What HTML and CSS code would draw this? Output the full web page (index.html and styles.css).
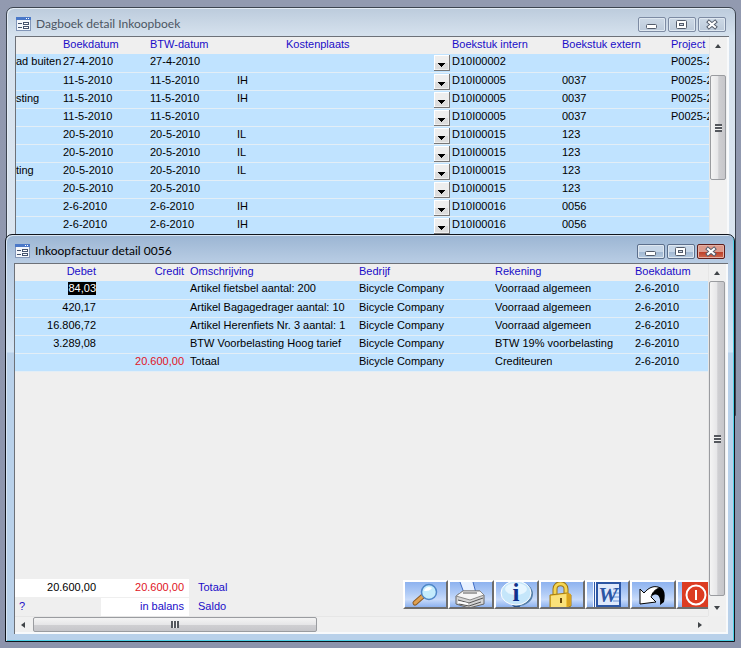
FILE: index.html
```
<!DOCTYPE html>
<html lang="nl">
<head>
    <meta charset="UTF-8">
    <meta name="viewport" content="width=device-width, initial-scale=1.0">
    <title>Inkoopboek</title>
    <link rel="stylesheet" href="styles.css">
</head>
<body>
    <!-- Shared symbols -->
    <svg class="symbols" aria-hidden="true">
        <symbol id="icon-form" viewBox="0 0 15 14">
            <rect x="0.5" y="0.5" width="14" height="13" fill="#f4f7fb" stroke="#8296b8"/>
            <rect x="0" y="0" width="15" height="3" fill="#4a78c8"/>
            <path d="M10 1.5h1M12 1.5h1" stroke="#fff"/>
            <path d="M2 6.5h4M2 10.5h4" stroke="#44536e"/>
            <rect x="7.5" y="5.5" width="5" height="2" fill="#fff" stroke="#44536e"/>
            <rect x="7.5" y="9.5" width="5" height="2" fill="#fff" stroke="#44536e"/>
        </symbol>
        <symbol id="icon-minimize" viewBox="0 0 26 13">
            <rect x="7.5" y="6.5" width="10" height="4" rx="1" fill="#fff" stroke="#535c6b"/>
        </symbol>
        <symbol id="icon-maximize" viewBox="0 0 26 13">
            <rect x="7.5" y="2.5" width="10" height="8" rx="1" fill="#fff" stroke="#535c6b"/>
            <rect x="10.5" y="5.5" width="4" height="2" fill="#cfd8e4" stroke="#535c6b"/>
        </symbol>
        <symbol id="icon-close" viewBox="0 0 26 13">
            <path d="M10 4l6 5M16 4l-6 5" stroke="#535c6b" stroke-width="4" stroke-linecap="square"/>
            <path d="M10 4l6 5M16 4l-6 5" stroke="#fff" stroke-width="2" stroke-linecap="square"/>
        </symbol>
    </svg>

    <main class="desktop">
        <section class="window window-back">
            <header class="titlebar">
                <svg class="title-icon"><use href="#icon-form"/></svg>
                <h2>Dagboek detail Inkoopboek</h2>
                <div class="window-buttons">
                    <button aria-label="Minimaliseren"><svg><use href="#icon-minimize"/></svg></button>
                    <button aria-label="Maximaliseren"><svg><use href="#icon-maximize"/></svg></button>
                    <button aria-label="Sluiten"><svg><use href="#icon-close"/></svg></button>
                </div>
            </header>
            <div class="pane">
                <div class="sheet">
                    <table class="dagboek">
                        <colgroup>
                            <col class="c-soort"><col class="c-datum"><col class="c-datum"><col><col class="c-intern"><col class="c-extern"><col class="c-project">
                        </colgroup>
                        <thead>
                            <tr><th></th><th>Boekdatum</th><th>BTW-datum</th><th class="kp-head">Kostenplaats</th><th>Boekstuk intern</th><th>Boekstuk extern</th><th>Project</th></tr>
                        </thead>
                        <tbody>
                            <tr><td>ad buiten</td><td>27-4-2010</td><td>27-4-2010</td><td><select aria-label="Kostenplaats"><option></option></select></td><td>D10I00002</td><td></td><td>P0025-2</td></tr>
                            <tr><td></td><td>11-5-2010</td><td>11-5-2010</td><td><select aria-label="Kostenplaats"><option>IH</option></select></td><td>D10I00005</td><td>0037</td><td>P0025-2</td></tr>
                            <tr><td>sting</td><td>11-5-2010</td><td>11-5-2010</td><td><select aria-label="Kostenplaats"><option>IH</option></select></td><td>D10I00005</td><td>0037</td><td>P0025-2</td></tr>
                            <tr><td></td><td>11-5-2010</td><td>11-5-2010</td><td><select aria-label="Kostenplaats"><option></option></select></td><td>D10I00005</td><td>0037</td><td>P0025-2</td></tr>
                            <tr><td></td><td>20-5-2010</td><td>20-5-2010</td><td><select aria-label="Kostenplaats"><option>IL</option></select></td><td>D10I00015</td><td>123</td><td></td></tr>
                            <tr><td></td><td>20-5-2010</td><td>20-5-2010</td><td><select aria-label="Kostenplaats"><option>IL</option></select></td><td>D10I00015</td><td>123</td><td></td></tr>
                            <tr><td>ting</td><td>20-5-2010</td><td>20-5-2010</td><td><select aria-label="Kostenplaats"><option>IL</option></select></td><td>D10I00015</td><td>123</td><td></td></tr>
                            <tr><td></td><td>20-5-2010</td><td>20-5-2010</td><td><select aria-label="Kostenplaats"><option></option></select></td><td>D10I00015</td><td>123</td><td></td></tr>
                            <tr><td></td><td>2-6-2010</td><td>2-6-2010</td><td><select aria-label="Kostenplaats"><option>IH</option></select></td><td>D10I00016</td><td>0056</td><td></td></tr>
                            <tr><td></td><td>2-6-2010</td><td>2-6-2010</td><td><select aria-label="Kostenplaats"><option>IH</option></select></td><td>D10I00016</td><td>0056</td><td></td></tr>
                        </tbody>
                    </table>
                </div>
                <div class="scroll-v">
                    <span class="arrow up"></span>
                    <span class="thumb thumb-back"></span>
                </div>
            </div>
        </section>

        <section class="window window-front">
            <header class="titlebar">
                <svg class="title-icon"><use href="#icon-form"/></svg>
                <h2>Inkoopfactuur detail 0056</h2>
                <div class="window-buttons">
                    <button aria-label="Minimaliseren"><svg><use href="#icon-minimize"/></svg></button>
                    <button aria-label="Maximaliseren"><svg><use href="#icon-maximize"/></svg></button>
                    <button class="close" aria-label="Sluiten"><svg><use href="#icon-close"/></svg></button>
                </div>
            </header>
            <div class="pane">
                <div class="sheet">
                    <table class="factuur">
                        <colgroup>
                            <col class="c-debet"><col class="c-credit"><col><col class="c-bedrijf"><col class="c-rekening"><col class="c-boekdatum">
                        </colgroup>
                        <thead>
                            <tr><th class="num">Debet</th><th class="num">Credit</th><th>Omschrijving</th><th>Bedrijf</th><th>Rekening</th><th>Boekdatum</th></tr>
                        </thead>
                        <tbody>
                            <tr><td class="num"><span class="selected">84,03</span></td><td></td><td>Artikel fietsbel aantal: 200</td><td>Bicycle Company</td><td>Voorraad algemeen</td><td>2-6-2010</td></tr>
                            <tr><td class="num">420,17</td><td></td><td>Artikel Bagagedrager aantal: 10</td><td>Bicycle Company</td><td>Voorraad algemeen</td><td>2-6-2010</td></tr>
                            <tr><td class="num">16.806,72</td><td></td><td>Artikel Herenfiets Nr. 3 aantal: 1</td><td>Bicycle Company</td><td>Voorraad algemeen</td><td>2-6-2010</td></tr>
                            <tr><td class="num">3.289,08</td><td></td><td>BTW Voorbelasting Hoog tarief</td><td>Bicycle Company</td><td>BTW 19% voorbelasting</td><td>2-6-2010</td></tr>
                            <tr><td></td><td class="num red">20.600,00</td><td>Totaal</td><td>Bicycle Company</td><td>Crediteuren</td><td>2-6-2010</td></tr>
                        </tbody>
                    </table>

                    <footer class="totals">
                        <div class="sums">
                            <span class="sum num">20.600,00</span>
                            <span class="sum num red">20.600,00</span>
                            <span class="sum-label">Totaal</span>
                            <a class="help" href="#">?</a>
                            <span class="sum num blue">in balans</span>
                            <span class="sum-label">Saldo</span>
                        </div>
                        <div class="toolbar">
                            <button aria-label="Zoeken">
                                <svg viewBox="0 0 42 26">
                                    <path d="M10 21l8-7" stroke="#8a5a24" stroke-width="5" stroke-linecap="round"/>
                                    <path d="M10 21l8-7" stroke="#e0a050" stroke-width="3" stroke-linecap="round"/>
                                    <circle cx="24" cy="10" r="7.5" fill="#c4ecfc" stroke="#4f87c8" stroke-width="1.5"/>
                                    <path d="M19 9c1-4 5-5 8-3-2 3-5 3-8 3z" fill="#fff"/>
                                </svg>
                            </button>
                            <button aria-label="Afdrukken">
                                <svg viewBox="0 0 42 26">
                                    <path d="M10 0l4 11h12l-3-11z" fill="#e8f1ff"/>
                                    <path d="M10 0l4 11M23 0l3 11" stroke="#3f6cc4"/>
                                    <path d="M6 14l7-5h17l4 4v9l-15 4-13-4z" fill="#d4d4d4" stroke="#666"/>
                                    <path d="M6 14l7-5h17l4 4-14 5z" fill="#f6f6f6" stroke="#888"/>
                                    <path d="M13 11h14M8 18l11 3 14-5M9 22l10 2 12-4" stroke="#555" fill="none"/>
                                    <path d="M8 20l10 2" stroke="#fff" stroke-width="2"/>
                                </svg>
                            </button>
                            <button aria-label="Informatie">
                                <svg viewBox="0 0 42 26">
                                    <path d="M15 22l6 6 5-6z" fill="#24508c"/>
                                    <ellipse cx="22" cy="12" rx="15" ry="12" fill="#5680a8"/>
                                    <ellipse cx="20" cy="11" rx="15" ry="12" fill="#c5e6fa" stroke="#fff"/>
                                    <ellipse cx="20" cy="7" rx="11" ry="6" fill="#e7f6ff"/>
                                    <text x="20" y="19" text-anchor="middle" class="glyph-i">i</text>
                                </svg>
                            </button>
                            <button aria-label="Vergrendelen">
                                <svg viewBox="0 0 42 26">
                                    <path d="M14 14V7c0-7 11-7 11 0v6" fill="none" stroke="#9a7514" stroke-width="5"/>
                                    <path d="M14 14V7c0-7 11-7 11 0v6" fill="none" stroke="#f5d552" stroke-width="3"/>
                                    <path d="M9 13l17-2 4 2v11l-7 3H9z" fill="#f0c63c" stroke="#a67c12"/>
                                    <path d="M10 14l15-2v14H10z" fill="#fbe27a"/>
                                    <path d="M26 11v14l4-2V12z" fill="#d9a21e"/>
                                    <path d="M20 16v5" stroke="#6b4a08" stroke-width="2"/>
                                </svg>
                            </button>
                            <button aria-label="Word">
                                <svg viewBox="0 0 42 26">
                                    <rect x="6" y="0" width="28" height="26" fill="#f5f8ff"/>
                                    <rect x="10" y="1" width="23" height="23" fill="#dfe9fb" stroke="#2c56a4" stroke-width="2"/>
                                    <path d="M7.5 0v26" stroke="#2c56a4"/>
                                    <path d="M26 7h6M26 11h6M26 15h6M26 19h6" stroke="#6d92d2"/>
                                    <text x="21" y="20" text-anchor="middle" class="glyph-w">W</text>
                                </svg>
                            </button>
                            <button aria-label="Ongedaan maken">
                                <svg viewBox="0 0 42 26">
                                    <path d="M20 6c9-4 15 1 12 14l-4 3c1-8-2-13-8-9z" fill="#000"/>
                                    <path d="M8 7l4 4c5-6 11-8 16-5-5 1-8 5-9 9l5 5-16 2z" fill="#fff" stroke="#000"/>
                                </svg>
                            </button>
                            <button class="exit" aria-label="Afsluiten">
                                <svg viewBox="0 0 42 26">
                                    <rect x="4" y="0" width="32" height="26" fill="#dc3c22"/>
                                    <circle cx="18" cy="13" r="9.5" fill="none" stroke="#fff" stroke-width="2"/>
                                    <path d="M18 8v10" stroke="#fff" stroke-width="2"/>
                                </svg>
                            </button>
                        </div>
                    </footer>
                </div>
                <div class="scroll-v">
                    <span class="arrow up"></span>
                    <span class="thumb thumb-front"></span>
                    <span class="arrow down"></span>
                </div>
                <div class="scroll-h">
                    <span class="arrow left"></span>
                    <span class="thumb thumb-h"></span>
                    <span class="arrow right"></span>
                </div>
            </div>
        </section>
    </main>
</body>
</html>
```
FILE: styles.css
```
* {
    box-sizing: border-box;
}

body {
    margin: 0;
    font-family: "Liberation Sans", Arial, sans-serif;
    font-size: 11px;
    line-height: 16px;
    color: #000;
}

.symbols {
    display: none;
}

.desktop {
    position: relative;
    min-height: 100vh;
    overflow: hidden;
    background: linear-gradient(#929ab0, #8c94ac);
}

/* Windows */
.window {
    position: absolute;
    display: flex;
    flex-direction: column;
    padding: 0 6px 6px 8px;
    border: 1px solid #3c4450;
    border-radius: 7px 7px 0 0;
}

.window-back {
    top: 7px;
    left: 6px;
    right: 5px;
    height: 409px;
    background: linear-gradient(#bccbdc, #d6e2ee 28px, #dfe8f1);
    box-shadow: inset 1px 1px 0 #e4ecf5;
}

.window-front {
    top: 234px;
    left: 5px;
    right: 6px;
    bottom: 6px;
    padding-bottom: 7px;
    border-color: #10141c;
    background: linear-gradient(#9bb5d3, #b9cde4 28px, #d3e4f4 117px, #b9d1ea 118px);
    box-shadow: inset 1px 1px 0 #d9e6f3, inset -1px -1px 0 #4cd0e6;
}

.titlebar {
    display: flex;
    align-items: center;
    height: 28px;
    padding-top: 4px;
    flex: none;
}

.title-icon {
    width: 15px;
    height: 14px;
    margin: 0 5px 0 1px;
}

.titlebar h2 {
    flex: 1;
    margin: 0;
    font-family: Lato, "Segoe UI", sans-serif;
    font-size: 12px;
    font-weight: normal;
    color: #4c5663;
}

.window-front h2 {
    color: #000;
}

.window-buttons {
    display: flex;
    gap: 2px;
    margin-right: 3px;
}

.window-buttons button {
    width: 28px;
    height: 15px;
    padding: 0;
    border: 1px solid #7d8ba3;
    border-radius: 2px;
    background: linear-gradient(#cdd9e6, #bccada);
    box-shadow: inset 0 0 0 1px #dfe8f1;
}

.window-front .window-buttons button {
    border-color: #5c6f8c;
    background: linear-gradient(#c6d6e8 50%, #9fb6d1 50%, #b5cae0);
}

.window-front .window-buttons .close {
    border-color: #5e1e1c;
    background: linear-gradient(#dc9a8c 50%, #bb3a24 50%, #cf6a50);
    box-shadow: inset 0 0 0 1px #e5b0a4;
}

.window-buttons svg {
    display: block;
    width: 26px;
    height: 13px;
}

.pane {
    flex: 1;
    display: grid;
    grid-template-columns: minmax(0, 1fr) 18px;
    grid-template-rows: minmax(0, 1fr);
    border: 1px solid #6d7178;
    border-width: 1px 0 0 1px;
    box-shadow: inset -2px -2px 0 #f8fafc;
    padding: 0 2px 2px 0;
    background: #efefef;
}

.window-front .pane {
    grid-template-rows: minmax(0, 1fr) 16px;
}

.sheet {
    display: flex;
    flex-direction: column;
    justify-content: space-between;
    overflow: hidden;
}

/* Data sheets */
table {
    width: 100%;
    table-layout: fixed;
    border-collapse: collapse;
}

th,
td {
    height: 18px;
    padding: 0;
    line-height: 15px;
    text-align: left;
    vertical-align: top;
    white-space: nowrap;
    overflow: hidden;
}

th {
    height: 17px;
    font-weight: normal;
    color: #1a0dc8;
}

td {
    background: #c0e3ff;
    border-bottom: 1px solid #e3eef6;
}

.c-soort { width: 47px; }
.c-datum { width: 87px; }
.c-intern { width: 110px; }
.c-extern { width: 109px; }
.c-project { width: 38px; }
.c-debet { width: 86px; }
.c-credit { width: 88px; }
.c-bedrijf { width: 136px; }
.c-rekening { width: 140px; }
.c-boekdatum { width: 73px; }

.dagboek .kp-head {
    padding-left: 49px;
}

.dagboek td:nth-child(4) {
    padding-right: 2px;
}

.factuur th:nth-child(3),
.factuur td:nth-child(3) {
    padding-left: 1px;
}

select {
    appearance: none;
    display: block;
    width: 100%;
    height: 17px;
    padding: 0 0 2px;
    border: 0;
    border-radius: 0;
    font: inherit;
    color: #000;
    background: url("data:image/svg+xml,%3Csvg xmlns='http://www.w3.org/2000/svg' width='16' height='16'%3E%3Crect width='16' height='16' fill='%23777'/%3E%3Crect width='15' height='15' fill='%23fff'/%3E%3Crect x='1' y='1' width='14' height='14' fill='%23eee'/%3E%3Crect x='1' y='8' width='13' height='6' fill='%23ddd'/%3E%3Cpath d='M4 8h7v1h-1v1h-1v1h-1v1h-1v-1h-1v-1h-1v-1h-1z'/%3E%3C/svg%3E") no-repeat right bottom;
}

.num {
    text-align: right;
    padding-right: 5px;
}

.red {
    color: #e0141e;
}

.blue {
    color: #1a0dc8;
}

.selected {
    display: inline-block;
    line-height: 13px;
    color: #fff;
    background: #000;
}

/* Totals and toolbar */
.totals {
    display: flex;
    justify-content: space-between;
    align-items: flex-start;
}

.sums {
    display: grid;
    grid-template-columns: 86px 88px 60px;
    grid-template-rows: 18px 18px;
    row-gap: 1px;
}

.sum {
    background: #fff;
    line-height: 17px;
}

.sum-label,
.help {
    padding-left: 9px;
    color: #1a0dc8;
    line-height: 17px;
    text-decoration: none;
}

.help {
    padding-left: 4px;
}

.toolbar {
    display: flex;
    width: 318px;
    margin-right: -13px;
    padding-top: 1px;
}

.toolbar button {
    flex: 1;
    height: 29px;
    padding: 0;
    border: 2px solid;
    border-color: #fff #6d6d6d #6d6d6d #fff;
    background: linear-gradient(#8db2ef, #b0cbf6 45%, #c8dbfa 70%, #8db2ef);
    overflow: hidden;
}

.toolbar svg {
    display: block;
    width: 42px;
    height: 26px;
}

.glyph-i {
    font: bold 25px "Liberation Serif", serif;
    fill: #10318c;
}

.glyph-w {
    font: italic bold 22px "Liberation Serif", serif;
    fill: #2c56a4;
}

/* Scroll bars */
.scroll-v {
    display: flex;
    flex-direction: column;
    padding-right: 1px;
    background: #f0f0f0;
    border-left: 1px solid #e6e6e6;
}

.scroll-h {
    display: flex;
    border-top: 1px solid #e6e6e6;
    background: #f0f0f0;
}

.arrow {
    display: flex;
    align-items: center;
    justify-content: center;
    flex: none;
    width: 16px;
    height: 17px;
}

.arrow::before {
    content: "";
    border: 3px solid transparent;
}

.up::before {
    border-top: 0;
    border-bottom: 4px solid #404448;
}

.down::before {
    border-bottom: 0;
    border-top: 4px solid #404448;
}

.left::before {
    border-left: 0;
    border-right: 4px solid #404448;
}

.right::before {
    border-right: 0;
    border-left: 4px solid #404448;
}

.thumb {
    display: flex;
    align-items: center;
    justify-content: center;
    border: 1px solid #9a9ca0;
    border-radius: 2px;
    background: linear-gradient(90deg, #f4f4f4, #e6e6e8 50%, #cfcfd2 55%, #c6c6ca);
}

.thumb::before {
    content: "";
    width: 7px;
    height: 8px;
    background: repeating-linear-gradient(#55585e 0 2px, #f4f4f4 2px 3px);
}

.thumb-back {
    height: 105px;
    margin-top: 21px;
}

.thumb-front {
    flex: 1;
    margin-bottom: 3px;
}

.scroll-h .arrow {
    height: 15px;
}

.thumb-h {
    width: 41%;
    margin-left: 2px;
    background: linear-gradient(#f4f4f4, #e6e6e8 50%, #cfcfd2 55%, #c6c6ca);
}

.thumb-h::before {
    width: 8px;
    height: 7px;
    background: repeating-linear-gradient(90deg, #55585e 0 2px, #f4f4f4 2px 3px);
}

.scroll-h .right {
    margin-left: auto;
}
```
